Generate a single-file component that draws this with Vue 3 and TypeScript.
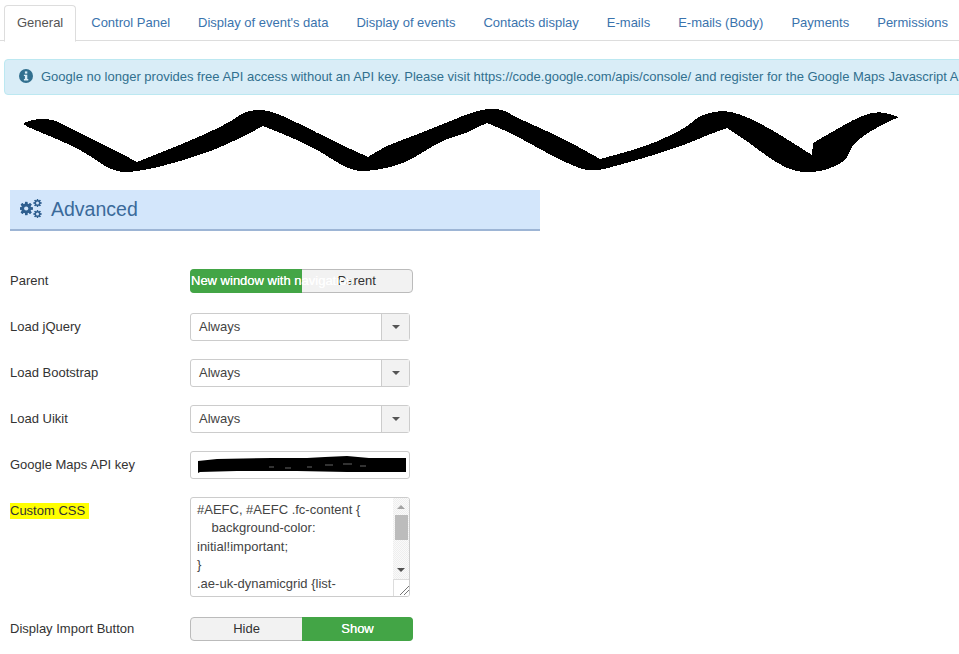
<script setup lang="ts">
const tabs: string[] = ['General', 'Control Panel', "Display of event's data", 'Display of events', 'Contacts display', 'E-mails', 'E-mails (Body)', 'Payments', 'Permissions']
const selects: string[] = ['Load jQuery', 'Load Bootstrap', 'Load Uikit']
const gearTeeth: number[] = [0, 45, 90, 135, 180, 225, 270, 315]
const cssText = '#AEFC, #AEFC .fc-content {\n    background-color:\ninitial!important;\n}\n.ae-uk-dynamicgrid {list-\nstyle-type: none; }'

const scribblePts: number[][] = '24,123 33,119 53,119 67,127 107,146 137,162 183,144 227,124 247,110 270,110 300,124 333,141 368,157 383,147 413,136 443,124 480,109 503,109 513,116 547,131 577,146 600,159 627,152 657,142 687,127 700,115 723,110 743,115 767,127 790,141 812,155 813,143 830,133 860,116 880,111 899,117 880,125 853,143 848,157 840,164 820,172 795,172 773,161 750,143 727,128 710,134 687,144 657,154 623,164 593,172 573,166 547,153 513,134 487,123 480,126 467,133 440,141 405,164 367,172 347,169 320,151 293,138 263,126 230,144 183,161 137,172 113,172 83,151 57,139 25,126'
  .split(' ')
  .map((p) => p.split(',').map(Number))

const scribblePath: string = (() => {
  const sharp = new Set([5, 12, 21, 30, 31, 35, 44, 53, 62])
  let d = `M${scribblePts[0][0]} ${scribblePts[0][1]}`
  for (let i = 1; i < scribblePts.length; i++) {
    const [x, y] = scribblePts[i]
    const [nx, ny] = scribblePts[(i + 1) % scribblePts.length]
    if (sharp.has(i)) d += ` L${x} ${y}`
    else d += ` Q${x} ${y} ${(x + nx) / 2} ${(y + ny) / 2}`
  }
  return d + ' Z'
})()
</script>

<template>
  <div class="page">
    <ul class="tabs">
      <li v-for="(t, i) in tabs" :key="t" class="tab" :class="{ active: i === 0 }">{{ t }}</li>
    </ul>

    <div class="alert">
      <svg class="info" width="14" height="14" viewBox="0 0 14 14">
        <circle cx="7" cy="7" r="7" fill="#31708f" />
        <rect x="5.9" y="2.4" width="2.4" height="2.2" fill="#d9edf7" />
        <path d="M4.9 5.7h3.4v4.4h1v1.4H4.9v-1.4h1V7.1h-1z" fill="#d9edf7" />
      </svg>
      <span class="alert-text">Google no longer provides free API access without an API key. Please visit https://code.google.com/apis/console/ and register for the Google Maps Javascript API.</span>
    </div>

    <svg class="scribble" width="959" height="95" viewBox="0 95 959 95" shape-rendering="crispEdges">
      <path :d="scribblePath" fill="#000" />
    </svg>

    <div class="heading">
      <svg class="gears" width="22" height="21" viewBox="0 0 22 21">
        <g fill="#2f5f8f">
          <g transform="translate(6.2 10.5)">
            <rect v-for="a in gearTeeth" :key="a" x="-1.2" y="-6.6" width="2.4" height="13.2" :transform="`rotate(${a})`" />
            <circle r="5" />
            <circle r="2.1" fill="#d3e6fb" />
          </g>
          <g transform="translate(17.5 5)">
            <rect v-for="a in gearTeeth" :key="a" x="-0.6" y="-4" width="1.2" height="8" :transform="`rotate(${a})`" />
            <circle r="3" />
            <circle r="1.5" fill="#d3e6fb" />
          </g>
          <g transform="translate(17.5 16)">
            <rect v-for="a in gearTeeth" :key="a" x="-0.6" y="-4" width="1.2" height="8" :transform="`rotate(${a})`" />
            <circle r="3" />
            <circle r="1.5" fill="#d3e6fb" />
          </g>
        </g>
      </svg>
      <span>Advanced</span>
    </div>

    <div class="form">
      <label class="lbl">Parent</label>
      <div class="toggle">
        <div class="opt on overflow">New window with navigation</div>
        <div class="opt">Parent</div>
      </div>

      <template v-for="s in selects" :key="s">
        <label class="lbl low">{{ s }}</label>
        <div class="select">
          <span class="sel-value">Always</span>
          <span class="sel-btn"><i class="caret"></i></span>
        </div>
      </template>

      <label class="lbl low">Google Maps API key</label>
      <div class="input">
        <svg class="redact" width="210" height="18" viewBox="0 0 210 18">
          <path d="M1 5 L20 3 L75 2 L110 2 L128 1 L150 0 L172 2 L209 2 L209 16 L150 16 L100 15 L40 15 L3 16 L1 17 Z" fill="#000" />
          <path d="M72 11h5M88 12h6M110 11h5M128 9h8M146 8h9M163 10h6" stroke="#fff" stroke-width="0.4" fill="none" />
        </svg>
      </div>

      <label class="lbl top"><mark class="hl">Custom CSS&nbsp;</mark></label>
      <div class="textarea">
        <div class="ta-text">{{ cssText }}</div>
        <div class="ta-side">
          <div class="scrollbar">
            <i class="arrow up"></i>
            <div class="thumb"></div>
            <i class="arrow down"></i>
          </div>
          <div class="resizer">
            <svg width="16" height="16" viewBox="0 0 16 16">
              <path d="M6 15 L15 6 M10 15 L15 10" stroke="#777" stroke-width="1" fill="none" />
            </svg>
          </div>
        </div>
      </div>

      <label class="lbl">Display Import Button</label>
      <div class="toggle">
        <div class="opt center">Hide</div>
        <div class="opt on center">Show</div>
      </div>
    </div>
  </div>
</template>

<style>
html, body { background: #fff; overflow: hidden; }
</style>

<style scoped>
.page {
  width: 959px;
  height: 654px;
  overflow: hidden;
  font-family: "Liberation Sans", Arial, sans-serif;
  font-size: 13px;
  line-height: 18px;
  color: #333;
  box-sizing: border-box;
  padding-top: 5px;
}
.tabs {
  list-style: none;
  margin: 0;
  padding: 0 0 0 4px;
  display: flex;
  border-bottom: 1px solid #ddd;
  height: 35px;
  white-space: nowrap;
}
.tab {
  padding: 8px 12px;
  margin-right: 2px;
  border: 1px solid transparent;
  border-radius: 4px 4px 0 0;
  color: #3a73ad;
  height: 18px;
  flex: none;
}
.tab.active {
  color: #555;
  background: #fff;
  border-color: #ddd #ddd #fff;
  height: 19px;
}
.alert {
  margin: 18px 0 0 4px;
  height: 36px;
  width: 1100px;
  box-sizing: border-box;
  background: #d9edf7;
  border: 1px solid #bce8f1;
  border-radius: 4px;
  color: #31708f;
  font-size: 13px;
  display: flex;
  align-items: center;
  padding: 0 0 2px 14px;
  white-space: nowrap;
}
.alert-text { padding-top: 2px; }
.info { flex: none; margin-right: 8px; }
.scribble { display: block; }
.heading {
  margin-left: 10px;
  width: 530px;
  height: 41px;
  box-sizing: border-box;
  background: #d3e6fb;
  border-bottom: 2px solid #9db5d5;
  color: #3a6a9a;
  font-size: 19.5px;
  display: flex;
  align-items: center;
  padding: 0 0 2px 10px;
  gap: 9px;
}
.gears { flex: none; }
.form {
  margin: 38px 0 0 10px;
  display: grid;
  grid-template-columns: 180px 223px;
  row-gap: 20px;
  align-items: center;
}
.lbl { color: #333; }
.lbl.low { padding-top: 2px; }
.lbl.top { align-self: start; margin-top: 5px; }
.hl { background: #ffff00; color: #333; padding: 0 0 1px; }
.toggle {
  display: flex;
  height: 24px;
  width: 223px;
  box-sizing: border-box;
  border: 1px solid #bbb;
  border-radius: 4px;
  background: #f2f2f2;
}
.opt {
  flex: 1 1 0;
  min-width: 0;
  text-align: center;
  line-height: 22px;
  white-space: nowrap;
  color: #333;
}
.opt.on {
  background: #43a546;
  color: #fff;
  text-shadow: 0 0 0.6px #fff;
}
.opt.on.center { margin: -1px -1px -1px 0; line-height: 24px; border-radius: 0 4px 4px 0; }
.opt.overflow {
  margin: -1px 0 -1px -1px;
  line-height: 24px;
  border-radius: 4px 0 0 4px;
  text-align: left;
  padding-left: 1px;
  position: relative;
  z-index: 1;
}
.select {
  display: flex;
  width: 220px;
  height: 28px;
  margin-bottom: -2px;
  box-sizing: border-box;
  border: 1px solid #ccc;
  border-radius: 3px;
  background: #fff;
}
.sel-value { flex: 1; padding-left: 8px; line-height: 26px; color: #444; }
.sel-btn {
  width: 27px;
  flex: none;
  background: #f2f2f2;
  border-left: 1px solid #ccc;
  display: flex;
  align-items: center;
  justify-content: center;
}
.caret {
  width: 0;
  height: 0;
  border-left: 4px solid transparent;
  border-right: 4px solid transparent;
  border-top: 4px solid #555;
}
.input {
  width: 220px;
  height: 28px;
  margin-bottom: -2px;
  box-sizing: border-box;
  border: 1px solid #ccc;
  border-radius: 3px;
  background: #fff;
  display: flex;
  align-items: center;
  padding-left: 6px;
}
.redact { display: block; flex: none; }
.textarea {
  width: 220px;
  height: 100px;
  box-sizing: border-box;
  border: 1px solid #ccc;
  border-radius: 3px;
  background: #fff;
  display: flex;
  overflow: hidden;
}
.ta-text {
  flex: 1;
  padding: 3px 0 0 6px;
  line-height: 18.4px;
  white-space: pre-wrap;
  color: #444;
  overflow: hidden;
}
.ta-side {
  width: 16px;
  flex: none;
  display: flex;
  flex-direction: column;
}
.scrollbar {
  height: 81px;
  background: repeating-conic-gradient(#eeeeee 0 25%, #fafafa 0 50%) 0 0 / 2px 2px;
  display: flex;
  flex-direction: column;
  align-items: center;
  position: relative;
}
.arrow {
  position: absolute;
  left: 4px;
  width: 0;
  height: 0;
  border-left: 4px solid transparent;
  border-right: 4px solid transparent;
}
.arrow.up { top: 7px; border-bottom: 4px solid #a3a3a3; }
.arrow.down { bottom: 7px; border-top: 4px solid #505050; }
.thumb {
  width: 13px;
  height: 25px;
  margin-top: 17px;
  background: #bcbcbc;
}
.resizer {
  flex: 1;
  border-left: 1px solid #ddd;
  border-top: 1px solid #ddd;
  background: #fff;
}
.resizer svg { display: block; }
</style>
